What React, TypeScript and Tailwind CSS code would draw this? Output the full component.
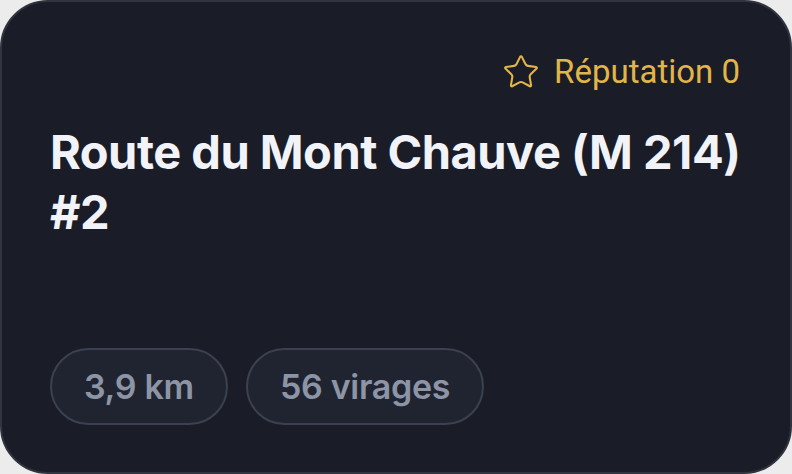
import { Star } from "lucide-react";

const stats = ["3,9 km", "56 virages"];

export default function App() {
  return (
    <div className="h-[474px] w-[792px] bg-[#ececec]">
      <div
        className="flex h-full w-full flex-col rounded-[48px] border-2 border-[#30343e] bg-[#1a1d27] px-[48px] pb-[47px] pt-[50px]"
        style={{ fontFamily: "Inter, 'Noto Sans', sans-serif" }}
      >
        <div className="flex items-center justify-end gap-[14px] pr-[2px] text-[#e2b548]">
          <Star size={38} strokeWidth={1.3} />
          <span
            className="text-[33px] leading-[40px]"
            style={{ fontFamily: "Roboto, 'Noto Sans', sans-serif" }}
          >
            Réputation 0
          </span>
        </div>
        <h1 className="mt-[30px] text-[47px] font-bold leading-[60px] tracking-[-0.5px] text-[#f1f3f8]">
          Route du Mont Chauve (M 214) #2
        </h1>
        <div className="mt-auto flex gap-[18px]">
          {stats.map((s) => (
            <span
              key={s}
              className="flex h-[77px] items-center rounded-full border-2 border-[#3b4150] bg-[#1f2430] px-[32px] text-[34px] font-semibold tracking-[-0.3px] text-[#8d94a5]"
            >
              {s}
            </span>
          ))}
        </div>
      </div>
    </div>
  );
}
